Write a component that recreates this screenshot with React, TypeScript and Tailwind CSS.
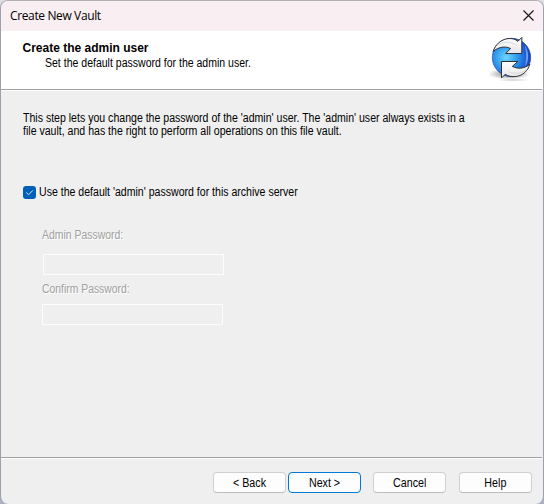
import React from "react";

function SyncLogo() {
  return (
    <svg width="48" height="48" viewBox="0 0 48 48" className="block">
      <defs>
        <radialGradient id="globe" cx="0.36" cy="0.5" r="0.68">
          <stop offset="0" stopColor="#6fd4fd" />
          <stop offset="0.35" stopColor="#3ba6f0" />
          <stop offset="0.7" stopColor="#1e6adb" />
          <stop offset="1" stopColor="#1238b4" />
        </radialGradient>
        <linearGradient id="arrow" x1="0" y1="0" x2="0" y2="1">
          <stop offset="0" stopColor="#ffffff" />
          <stop offset="1" stopColor="#e6e6e8" />
        </linearGradient>
        <radialGradient id="shade">
          <stop offset="0" stopColor="#000" stopOpacity="0.5" />
          <stop offset="1" stopColor="#000" stopOpacity="0" />
        </radialGradient>
      </defs>
      <ellipse cx="20" cy="38" rx="21" ry="5.5" fill="url(#shade)" />
      <ellipse cx="24" cy="44" rx="16" ry="1.6" fill="url(#shade)" opacity="0.4" />
      <circle cx="22.5" cy="21.5" r="19.2" fill="url(#globe)" stroke="#1a3c9c" strokeWidth="0.6" />
      <path d="M35.5 9C40 15 40.5 24 36 31C37.5 24 38 16 35.5 9Z" fill="#9dbdff" opacity="0.7" />
      <path
        d="M4.2 15.5C6.2 8.5 12 3.5 19 2.6C23 2.2 26.5 3.2 29 5.3L32.8 1.4V17.5H16.6L21.6 12.6C17 9.9 9.5 10.7 4.2 15.5Z"
        fill="url(#arrow)" stroke="#303238" strokeWidth="1"
      />
      <path
        d="M40.8 28.2C38.8 34.8 34 39.5 27.5 40.4C23 41 18.8 40.4 16.3 38.2L12.5 42V25.5H28.8L23.3 30.4C28.7 33.2 35.8 32.8 40.8 28.2Z"
        fill="url(#arrow)" stroke="#303238" strokeWidth="1"
      />
      <path d="M8 9.8C14 5 22 5 28 9.5" fill="none" stroke="#d2d3d6" strokeWidth="0.8" />
      <path d="M19 35.5C26 39 33 37.5 38 33" fill="none" stroke="#d2d3d6" strokeWidth="0.8" />
    </svg>
  );
}

function Button({ children, primary = false, className = "" }: { children: React.ReactNode; primary?: boolean; className?: string }) {
  return (
    <button
      className={`h-[21px] w-[73px] shrink-0 rounded-[4px] border bg-[#fdfdfd] pt-px text-center leading-[18px] ${
        primary ? "border-[#0078d4]" : "border-[#d0d0d0] border-b-[#bcbcbc]"
      } ${className}`}
    >
      <span className="inline-block scale-x-[0.89]">{children}</span>
    </button>
  );
}

export default function App() {
  return (
    <div className="h-[504px] w-[544px] overflow-hidden bg-linear-to-b from-[#dedfe2] to-[#a9b0c2] font-['Liberation_Sans',Arial,sans-serif] text-[12px] text-black">
      <div className="flex h-[504px] w-[544px] flex-col overflow-hidden rounded-[8px] border border-b-0 border-[#9da1ae] border-t-[#b3b0b3] bg-[#efefef]">
        <div className="flex h-[30px] shrink-0 justify-between bg-[#f9eef2] pl-[9px] pr-[9px]">
          <span className="pt-[7px] font-['Open_Sans',sans-serif] text-[12px] leading-[16px] tracking-[-0.37px]">Create New Vault</span>
          <svg width="11" height="11" viewBox="0 0 11 11" fill="none" stroke="#1b181a" strokeWidth="1.15" className="mt-[9px]">
            <path d="M0.5 0.5L10.5 10.5M10.5 0.5L0.5 10.5" />
          </svg>
        </div>

        <header className="flex h-[58px] shrink-0 justify-between bg-white pl-[21.5px]">
          <div className="pt-[10px] leading-[15px]">
            <h1 className="whitespace-nowrap font-bold">Create the admin user</h1>
            <p className="ml-[22.5px] origin-left scale-x-[0.877] whitespace-nowrap">Set the default password for the admin user.</p>
          </div>
          <div className="mr-[6px] mt-[5px]">
            <SyncLogo />
          </div>
        </header>
        <div className="mr-px h-[2px] shrink-0 border-b border-t border-b-white border-t-[#a0a0a0]" />

        <main className="flex h-[366px] shrink-0 flex-col pl-[22px]">
          <p className="mt-[21px] origin-left scale-x-[0.88] whitespace-nowrap leading-[13px]">
            <span className="block">This step lets you change the password of the 'admin' user. The 'admin' user always exists in a</span>
            <span className="block">file vault, and has the right to perform all operations on this file vault.</span>
          </p>
          <label className="mt-[47px] flex h-[15px] items-center">
            <span className="flex h-[13px] w-[13px] shrink-0 items-center justify-center rounded-[3px] bg-[#005fb8]">
              <svg width="9" height="9" viewBox="0 0 9 9" fill="none" stroke="#dcebf8" strokeWidth="1">
                <path d="M1.2 4.5L3.5 6.8L7.9 2.4" />
              </svg>
            </span>
            <span className="ml-[3px] origin-left scale-x-[0.88] whitespace-nowrap leading-[15px]">Use the default 'admin' password for this archive server</span>
          </label>
          <div className="mt-[28px] flex flex-col items-start pl-[19px] text-[#a0a0a0]">
            <span className="origin-left scale-x-[0.87] leading-[15px] [text-shadow:1px_1px_0_#ffffff]">Admin Password:</span>
            <span className="ml-px mt-[11px] h-[21px] w-[181px] border border-[#fcfcfc]" />
            <span className="mt-[7px] origin-left scale-x-[0.865] leading-[15px] [text-shadow:1px_1px_0_#ffffff]">Confirm Password:</span>
            <span className="mt-[7px] h-[21px] w-[181px] border border-[#fcfcfc]" />
          </div>
        </main>
        <div className="mr-px h-[2px] shrink-0 border-b border-t border-b-white border-t-[#a0a0a0]" />

        <footer className="flex pl-[212px] pt-[13px]">
          <Button>&lt; Back</Button>
          <Button primary className="ml-[2px]">Next &gt;</Button>
          <Button className="ml-[12px]">Cancel</Button>
          <Button className="ml-[13px]">Help</Button>
        </footer>
      </div>
    </div>
  );
}
